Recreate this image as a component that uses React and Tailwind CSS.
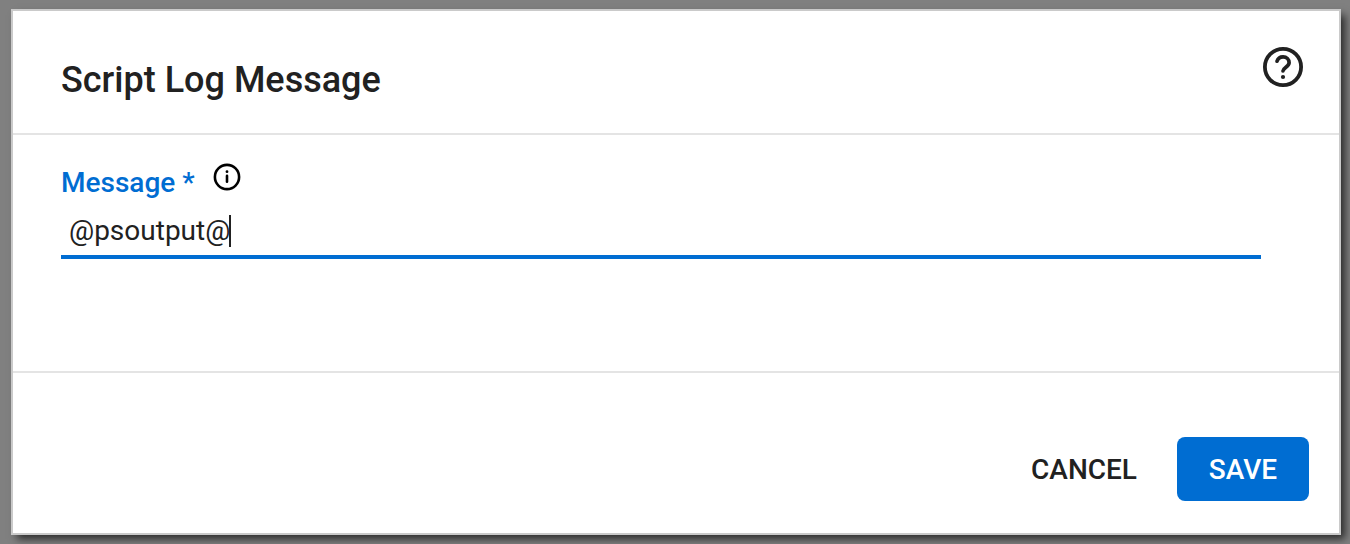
import React, { useState } from 'react';

const HelpIcon = () => (
  <svg width="48" height="48" viewBox="0 0 48 48" fill="none" stroke="#212121">
    <circle cx="24" cy="24" r="18.1" strokeWidth="3.8" />
    <path
      d="M18 18.2c.8-2.5 3.1-4.3 6.1-4.3 3.4 0 6 2.5 6 5.8 0 3.9-5.7 4.9-6.1 8.2"
      strokeWidth="3.7"
      strokeLinecap="round"
    />
    <circle cx="24" cy="34" r="2.1" fill="#212121" stroke="none" />
  </svg>
);

const InfoIcon = () => (
  <svg width="32" height="32" viewBox="0 0 32 32" fill="none" stroke="#000">
    <circle cx="16" cy="16" r="12.1" strokeWidth="2.6" />
    <path d="M16 14.9v5.9" strokeWidth="2.6" strokeLinecap="round" />
    <circle cx="16" cy="10.7" r="1.4" fill="#000" stroke="none" />
  </svg>
);

const App = () => {
  const [message] = useState('@psoutput@');

  return (
    <div className="h-[544px] w-[1350px] overflow-hidden bg-[#808080] pt-[9px] pl-[11px] font-['Roboto',sans-serif] text-[#212121]">
      <div className="flex h-[526px] w-[1330px] flex-col border-2 border-[#cacaca] bg-white shadow-[5px_5px_8px_-1px_#2b2b2b]">
        <header className="flex h-[124px] shrink-0 justify-between border-b-2 border-[#e4e4e4] pr-8 pl-12">
          <h1 className="pt-12 text-[36px] leading-[42px] font-medium">Script Log Message</h1>
          <button type="button" aria-label="Help" className="h-12 pt-8">
            <HelpIcon />
          </button>
        </header>

        <main className="h-[238px] shrink-0 border-b-2 border-[#e4e4e4] pt-[26px] pl-12">
          <div className="flex h-11 items-start gap-4">
            <label className="pt-[5px] text-[28px] leading-[33px] font-medium text-[#006dd2]">Message *</label>
            <InfoIcon />
          </div>
          <div className="flex h-[54px] w-[1200px] items-start border-b-4 border-[#006dd2] pt-[10px] pl-2">
            <span className="text-[28px] leading-8">{message}</span>
            <span className="-ml-px h-8 w-0.5 bg-[#212121]" />
          </div>
        </main>

        <footer className="flex flex-1 items-end justify-end gap-10 pr-[30px] pb-8">
          <button type="button" className="h-16 pt-0.5 text-[28px] font-medium">
            CANCEL
          </button>
          <button type="button" className="h-16 w-[132px] rounded-lg bg-[#006dd2] pt-0.5 text-[28px] font-medium text-white">
            SAVE
          </button>
        </footer>
      </div>
    </div>
  );
};

export default App;
